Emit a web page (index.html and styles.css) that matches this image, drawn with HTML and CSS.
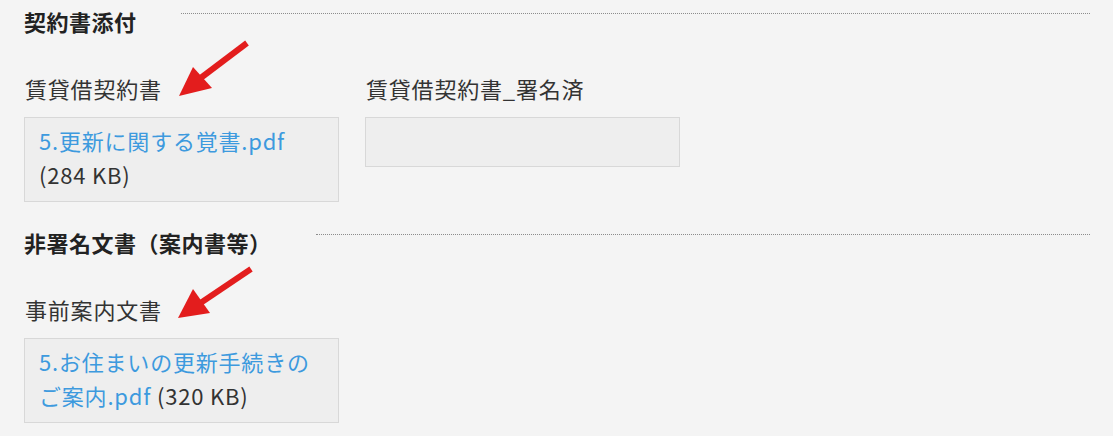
FILE: index.html
```html
<!DOCTYPE html>
<html lang="ja">
<head>
    <meta charset="UTF-8">
    <meta name="viewport" content="width=device-width, initial-scale=1.0">
    <title>契約書添付</title>
    <link rel="stylesheet" href="styles.css">
</head>
<body>
    <main class="attachments">
        <section class="doc-group">
            <div class="group-head">
                <h2>契約書添付</h2>
                <span class="rule"></span>
            </div>
            <div class="fields">
                <div class="field">
                    <svg class="pointer pointer-lease" width="90" height="70" viewBox="0 0 90 70">
                        <line x1="77" y1="8" x2="28" y2="45" stroke="#e31d1d" stroke-width="6"/>
                        <polygon points="23,32 42,53 9,61" fill="#e31d1d"/>
                    </svg>
                    <div class="field-label">賃貸借契約書</div>
                    <div class="file-box">
                        <a href="#">5.更新に関する覚書.pdf</a> <span class="size">(284 KB)</span>
                    </div>
                </div>
                <div class="field">
                    <div class="field-label">賃貸借契約書_署名済</div>
                    <div class="file-box empty"></div>
                </div>
            </div>
        </section>

        <section class="doc-group">
            <div class="group-head">
                <h2>非署名文書（案内書等）</h2>
                <span class="rule"></span>
            </div>
            <div class="fields">
                <div class="field">
                    <svg class="pointer pointer-notice" width="90" height="70" viewBox="0 0 90 70">
                        <line x1="81" y1="8" x2="29" y2="43" stroke="#e31d1d" stroke-width="6"/>
                        <polygon points="23,28 40,52 8,57" fill="#e31d1d"/>
                    </svg>
                    <div class="field-label">事前案内文書</div>
                    <div class="file-box">
                        <a href="#">5.お住まいの更新手続きのご案内.pdf</a> <span class="size">(320 KB)</span>
                    </div>
                </div>
            </div>
        </section>
    </main>
</body>
</html>
```

FILE: styles.css
```css
body {
    margin: 0;
    padding: 0;
    background: #f4f4f4;
    color: #333333;
    font-family: "Noto Sans CJK JP", "Noto Sans", sans-serif;
    font-size: 22px;
    line-height: 34px;
    letter-spacing: 0.8px;
}

.attachments {
    padding: 4px 23px 0 24px;
}

.doc-group + .doc-group {
    margin-top: 23px;
}

.group-head {
    display: flex;
    align-items: flex-start;
    gap: 44px;
}

.group-head h2 {
    margin: 0;
    font-size: 22px;
    line-height: 34px;
    font-weight: bold;
    letter-spacing: 0.5px;
    color: #222222;
}

.rule {
    flex: 1;
    margin-top: 9px;
    border-top: 1px dotted #8c8c8c;
}

.fields {
    display: flex;
    gap: 26px;
    margin-top: 33px;
}

.field {
    position: relative;
    width: 315px;
}

.field-label {
    margin-bottom: 12px;
    padding-left: 1px;
}

.file-box {
    background: #eeeeee;
    border: 1px solid #d8d8d8;
    padding: 5px 14px 10px;
    min-height: 33px;
}

.file-box a {
    color: #3d9ade;
    text-decoration: none;
}

.size {
    color: #333333;
}

.pointer {
    position: absolute;
}

.pointer-lease {
    left: 146px;
    top: -36px;
}

.pointer-notice {
    left: 146px;
    top: -31px;
}
```
